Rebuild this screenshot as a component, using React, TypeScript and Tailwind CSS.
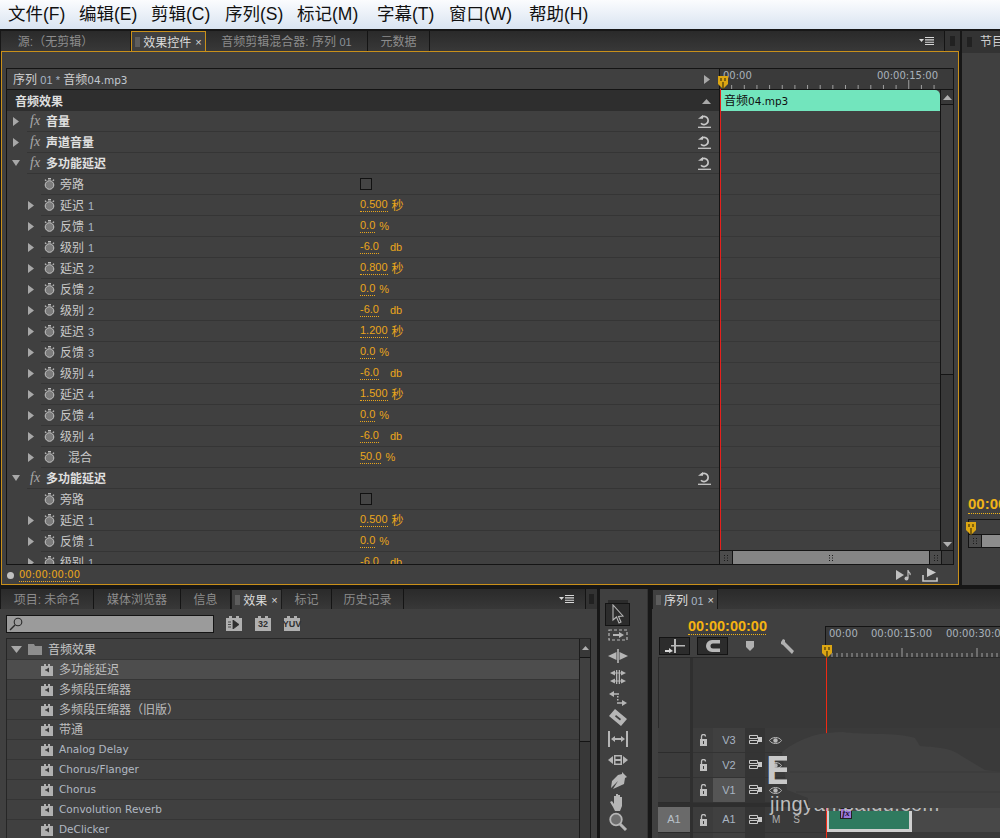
import { ReactNode } from "react";

const cjk = "font-['Liberation_Sans','Noto_Sans_CJK_SC',sans-serif]";
const uiFont = "font-['DejaVu_Sans','Noto_Sans_CJK_SC',sans-serif]";

type Param = { label: string; num?: string; value: string; unit: string };

const delayParams: Param[] = [
  { label: "延迟", num: "1", value: "0.500", unit: "秒" },
  { label: "反馈", num: "1", value: "0.0", unit: "%" },
  { label: "级别", num: "1", value: "-6.0", unit: "db" },
  { label: "延迟", num: "2", value: "0.800", unit: "秒" },
  { label: "反馈", num: "2", value: "0.0", unit: "%" },
  { label: "级别", num: "2", value: "-6.0", unit: "db" },
  { label: "延迟", num: "3", value: "1.200", unit: "秒" },
  { label: "反馈", num: "3", value: "0.0", unit: "%" },
  { label: "级别", num: "4", value: "-6.0", unit: "db" },
  { label: "延迟", num: "4", value: "1.500", unit: "秒" },
  { label: "反馈", num: "4", value: "0.0", unit: "%" },
  { label: "级别", num: "4", value: "-6.0", unit: "db" },
];

const secondParams = delayParams.slice(0, 3);

const audioEffects = [
  "多功能延迟",
  "多频段压缩器",
  "多频段压缩器（旧版）",
  "带通",
  "Analog Delay",
  "Chorus/Flanger",
  "Chorus",
  "Convolution Reverb",
  "DeClicker",
];

// menu items are not evenly spaced, widths read off the screenshot
const menus = [
  { label: "文件(F)", width: "w-[71px]" },
  { label: "编辑(E)", width: "w-[72px]" },
  { label: "剪辑(C)", width: "w-[74px]" },
  { label: "序列(S)", width: "w-[72px]" },
  { label: "标记(M)", width: "w-[80px]" },
  { label: "字幕(T)", width: "w-[72px]" },
  { label: "窗口(W)", width: "w-[80px]" },
  { label: "帮助(H)", width: "w-[70px]" },
];

function Tri({ down, className = "" }: { down?: boolean; className?: string }) {
  return (
    <svg width="8" height="9" viewBox="0 0 8 9" className={className}>
      {down ? <path d="M0 1h8L4 7z" fill="#a8a8a8" /> : <path d="M1 0l6 4.5L1 9z" fill="#a8a8a8" />}
    </svg>
  );
}

function Stopwatch() {
  return (
    <svg width="11" height="12" viewBox="0 0 11 12">
      <path d="M4 0h3v1.5H4zM0.5 2l1.2-.8 1 1.2-1 .8zM10.500 2l-1.200-.8-1 1.200 1 .8z" fill="#bdbdbd" />
      <circle cx="5.500" cy="7" r="4.300" fill="#7c7c7c" stroke="#c4c4c4" strokeWidth="1" />
    </svg>
  );
}

function ResetIcon() {
  return (
    <svg width="13" height="13" viewBox="0 0 13 13" fill="none">
      <path d="M3.200 2.500A4.100 4.100 0 1 1 3 8.200" stroke="#c8c8c8" strokeWidth="1.700" />
      <path d="M0 3.800h5V0z" fill="#c8c8c8" />
      <path d="M0 12.300h13" stroke="#c8c8c8" strokeWidth="1.300" />
    </svg>
  );
}

function PanelMenu() {
  return (
    <svg width="16" height="8" viewBox="0 0 16 8">
      <path d="M0 2h5L2.500 5z" fill="#d8d8d8" />
      <path d="M6 .5h9M6 2.900h9M6 5.300h9M6 7.500h9" stroke="#d8d8d8" strokeWidth="1.100" />
    </svg>
  );
}

function Grip({ vertical = true, color = "#111" }: { vertical?: boolean; color?: string }) {
  return vertical ? (
    <svg width="5" height="11" viewBox="0 0 5 11">
      <path d="M0 1h5M0 3h5M0 5h5M0 7h5M0 9h5" stroke={color} strokeWidth="1" />
    </svg>
  ) : (
    <svg width="20" height="4" viewBox="0 0 20 4">
      <path d="M1 0v4M3 0v4M5 0v4M7 0v4M9 0v4M11 0v4M13 0v4M15 0v4M17 0v4M19 0v4" stroke={color} strokeWidth="1" />
    </svg>
  );
}

function Playhead() {
  return (
    <svg width="10" height="13" viewBox="0 0 10 13">
      <path d="M0 0h10v8l-5 5-5-5z" fill="#dca613" />
      <path d="M3 2v3M7 2v3M5 6v7" stroke="#33280a" strokeWidth="1.100" />
    </svg>
  );
}

function Value({ value, unit }: { value: string; unit: string }) {
  return (
    <div className="flex items-center pt-px text-[11px] leading-none text-[#eaa61c]">
      <span className="border-b border-dotted border-[#eaa61c] pb-px">{value}</span>
      <span className={unit === "db" ? "ml-[11px]" : unit === "秒" ? "ml-[4px] text-[12px]" : "ml-[4px]"}>{unit}</span>
    </div>
  );
}

function FxRow({ name, open }: { name: string; open?: boolean }) {
  return (
    <div className="flex h-[21px] shrink-0">
      <div className="flex w-[20px] shrink-0 items-center pl-[5px]">
        <Tri down={open} />
      </div>
      <div className="flex flex-1 items-center border-b border-[#353535]">
        <span className="ml-[3px] w-[16px] font-['Liberation_Serif',serif] text-[14px] italic leading-none text-[#a8a8a8]">
          fx
        </span>
        <span className="pt-[2px] text-[12px] font-bold text-[#e0e0e0]">{name}</span>
        <span className="ml-auto mr-[8px] flex">
          <ResetIcon />
        </span>
      </div>
    </div>
  );
}

function ParamRow({ p, noArrow, indent }: { p: Param; noArrow?: boolean; indent?: boolean }) {
  return (
    <div className="flex h-[21px] shrink-0">
      <div className="flex w-[34px] shrink-0 items-center pl-[20px]">{!noArrow && <Tri />}</div>
      <div className="flex flex-1 items-center border-b border-[#353535]">
        <span className="ml-[3px] flex w-[16px]">
          <Stopwatch />
        </span>
        <span className={`w-[300px] pt-[2px] text-[12px] text-[#c8c8c8] ${indent ? "pl-[8px]" : ""}`}>
          {p.label}
          {p.num && <span className="ml-[4px] text-[11px] text-[#a8b6c6]">{p.num}</span>}
        </span>
        {p.value ? (
          <Value value={p.value} unit={p.unit} />
        ) : (
          <span className="h-[12px] w-[12px] border border-[#111] bg-[#454545]" />
        )}
      </div>
    </div>
  );
}

function Tab({
  label,
  width,
  active,
  gold,
  extra = "",
}: {
  label: ReactNode;
  width: string;
  active?: boolean;
  gold?: boolean;
  extra?: string;
}) {
  const look = active
    ? gold
      ? "relative z-10 border-x border-t border-[#c9901a] bg-[#404040] text-[#dcdcdc] -mb-px"
      : "relative z-10 border-x border-t border-[#1a1a1a] bg-[#404040] text-[#dcdcdc] -mb-px"
    : "border-r border-[#141414] bg-gradient-to-b from-[#2a2a2a] to-[#383838] text-[#8c8c8c]";
  return (
    <div className={`flex h-[20px] shrink-0 items-center justify-center pt-[2px] text-[12px] leading-none ${width} ${look} ${extra}`}>
      {active && (
        <span className="mr-[3px] flex">
          <Grip color="#7a7a7a" />
        </span>
      )}
      {label}
      {active && <span className="ml-[4px] text-[11px] text-[#d8d8d8]">×</span>}
    </div>
  );
}

function TabFill() {
  return <div className="h-[20px] flex-1 bg-gradient-to-b from-[#2a2a2a] to-[#383838]" />;
}

function Ruler({ width, step, major, offset }: { width: number; step: number; major: number; offset: number }) {
  const ticks: number[] = [];
  for (let x = offset; x < width; x += step) ticks.push(x);
  return (
    <svg width={width} height="9" className="absolute bottom-0 left-0">
      {ticks.map((x, i) => (
        <path key={i} d={`M${x} ${i % major === 0 ? 0 : 5}V9`} stroke="#a0a0a0" strokeWidth="1" />
      ))}
    </svg>
  );
}

function ScrollGrip() {
  return (
    <svg width="4" height="6" viewBox="0 0 4 6">
      <path d="M0 0h1v1H0zM3 0h1v1H3zM0 2.500h1v1H0zM3 2.500h1v1H3zM0 5h1v1H0zM3 5h1v1H3z" fill="#1a1a1a" />
    </svg>
  );
}

function SourcePanel() {
  return (
    <div className="flex w-[960px] shrink-0 flex-col">
      <div className="flex h-[20px] pl-px">
        <Tab width="w-[130px]" extra="pr-[20px]" label="源:（无剪辑）" />
        <Tab width="w-[75px]" label="效果控件" active gold />
        <Tab width="w-[162px]" label={<span>音频剪辑混合器: 序列 <span className="text-[11px] text-[#8a9098]">01</span></span>} />
        <Tab width="w-[62px]" label="元数据" />
        <div className="flex h-[20px] flex-1 items-center justify-end bg-gradient-to-b from-[#2a2a2a] to-[#383838] pr-[9px]">
          <PanelMenu />
        </div>
        <div className="flex w-[16px] items-center justify-center border-l border-[#141414] bg-[#333]">
          <Grip />
        </div>
      </div>
      <div className="ml-px mr-[1px] flex h-[534px] flex-col border border-[#c9901a] bg-[#404040] px-[4px] pt-[16px]">
        <div className="flex h-[497px] border border-[#141414]">
          <div className="flex w-[712px] shrink-0 flex-col overflow-hidden">
            <div className="flex h-[21px] shrink-0 items-center justify-between border-b border-[#141414] pl-[6px] pr-[8px] pt-px text-[12px] text-[#cfcfcf]">
              <span>
                序列 <span className="text-[11px] text-[#a8b6c6]">01 *</span> 音频<span className={`${uiFont} text-[10.500px] text-[#c0c8d0]`}>04.mp3</span>
              </span>
              <Tri />
            </div>
            <div className="flex h-[21px] shrink-0 items-center justify-between bg-[#2e2e2e] pl-[8px] pr-[8px] pt-[2px] text-[12px] font-bold text-[#dedede]">
              音频效果
              <svg width="9" height="5" viewBox="0 0 9 5">
                <path d="M4.500 0L9 5H0z" fill="#a8a8a8" />
              </svg>
            </div>
            <FxRow name="音量" />
            <FxRow name="声道音量" />
            <FxRow name="多功能延迟" open />
            <ParamRow p={{ label: "旁路", value: "", unit: "" }} noArrow />
            {delayParams.map((p, i) => (
              <ParamRow key={i} p={p} />
            ))}
            <ParamRow p={{ label: "混合", value: "50.0", unit: "%" }} indent />
            <FxRow name="多功能延迟" open />
            <ParamRow p={{ label: "旁路", value: "", unit: "" }} noArrow />
            {secondParams.map((p, i) => (
              <ParamRow key={i} p={p} />
            ))}
          </div>
          <div className="relative flex flex-1 flex-col border-l border-[#141414]">
            <div className="relative h-[21px] shrink-0 overflow-hidden border-b border-[#141414] bg-[#3a3a3a] text-[10px] leading-none">
              <span className={`${uiFont} absolute left-[3px] top-[2px] text-[#a9b2bc]`}>00:00</span>
              <span className={`${uiFont} absolute right-[15px] top-[2px] text-[#a9b2bc]`}>00:00:15:00</span>
              <Ruler width={220} step={12.650} major={15} offset={-1} />
            </div>
            <div className="flex min-h-0 flex-1">
              <div className="flex flex-1 flex-col overflow-hidden">
                <div className="flex h-[21px] shrink-0 items-center rounded-tr-[5px] bg-[#72e5bd] pl-[4px] pt-px text-[12px] leading-none text-[#101010]">
                  音频<span className={`${uiFont} text-[10.500px]`}>04.mp3</span>
                </div>
                {Array.from({ length: 22 }).map((_, i) => (
                  <div key={i} className="h-[21px] shrink-0 border-b border-[#373737]" />
                ))}
              </div>
              <div className="flex w-[13px] shrink-0 flex-col border-l border-[#141414] bg-[#383838]">
                <div className="flex h-[15px] items-center justify-center border-b border-[#141414]">
                  <svg width="9" height="5" viewBox="0 0 9 5">
                    <path d="M4.500 0L9 5H0z" fill="#b0b0b0" />
                  </svg>
                </div>
                <div className="h-[270px] border-b border-[#141414] bg-[#404040]" />
                <div className="flex flex-1 items-end justify-center pb-[3px]">
                  <svg width="9" height="5" viewBox="0 0 9 5">
                    <path d="M0 0h9L4.500 5z" fill="#b0b0b0" />
                  </svg>
                </div>
              </div>
            </div>
            <div className="flex h-[14px] shrink-0 border-t border-[#141414] bg-[#404040]">
              <div className="flex w-[13px] items-center justify-center border-r border-[#141414] bg-[#4c4c4c]">
                <ScrollGrip />
              </div>
              <div className="flex w-[196px] items-center justify-center bg-[#858585]">
                <ScrollGrip />
              </div>
              <div className="flex w-[13px] items-center justify-center border-x border-[#141414] bg-[#4c4c4c]">
                <ScrollGrip />
              </div>
              <div className="flex-1 bg-[#3c3c3c]" />
            </div>
            {/* playhead + red line sit over the clip */}
            <div className="absolute left-0 top-[20px] bottom-[14px] w-px bg-[#e8201c]" />
            <div className="absolute left-[-2px] top-[7px]">
              <Playhead />
            </div>
          </div>
        </div>
        <div className="flex h-[19px] items-center pt-px">
          <span className="ml-[1px] h-[7px] w-[7px] rounded-full bg-[#c0c0c0]" />
          <span className={`${uiFont} ml-[5px] border-b border-dotted border-[#eaa61c] text-[10px] leading-[12px] text-[#eaa61c]`}>
            00:00:00:00
          </span>
          <div className="ml-auto mr-[16px] flex items-center gap-[11px]">
            <svg width="15" height="12" viewBox="0 0 15 12">
              <path d="M0 1l8 5-8 5z" fill="#c0c0c0" />
              <path d="M12 1c0 3 3 2 2 5M12 1v8" stroke="#c0c0c0" strokeWidth="1.200" fill="none" />
              <circle cx="10.500" cy="9.500" r="2" fill="#c0c0c0" />
            </svg>
            <svg width="16" height="14" viewBox="0 0 16 14">
              <path d="M1 7v6h14V9.500" stroke="#c8c8c8" strokeWidth="1.600" fill="none" />
              <path d="M5 0l9 4.500L5 9z" fill="#c8c8c8" />
            </svg>
          </div>
        </div>
      </div>
    </div>
  );
}

function ProgramStub() {
  return (
    <div className="ml-[2px] flex h-[554px] flex-1 flex-col bg-[#404040]">
      <div className="flex h-[22px] items-center bg-[#333]">
        <span className="ml-[5px] flex">
          <Grip />
        </span>
        <span className="ml-[8px] text-[12px] text-[#cfcfcf]">节目</span>
      </div>
      <div className="mt-[442px] pl-[6px] font-['Liberation_Sans',sans-serif] text-[15px] font-bold leading-[18px] text-[#f0b418]">
        <span className="block w-[40px] overflow-hidden border-b border-dotted border-[#f0b418]">00:00</span>
      </div>
      <div className="relative ml-[6px] mt-[5px] h-[15px] border-l border-t border-[#141414]">
        <div className="absolute left-[-3px] top-[2px]">
          <Playhead />
        </div>
      </div>
      <div className="ml-[6px] flex h-[14px] border-y border-l border-[#141414]">
        <div className="flex w-[13px] items-center justify-center border-r border-[#141414] bg-[#4c4c4c]">
          <ScrollGrip />
        </div>
        <div className="flex-1 bg-[#8c8c8c]" />
      </div>
    </div>
  );
}

function EffectGlyph() {
  return (
    <svg width="12" height="12" viewBox="0 0 12 12">
      <path d="M0 2h3V0h2v2h2V0h2v2h3v10H0z" fill="#b0b0b0" />
      <path d="M8 3.500v5L5 6.500H4v-1h1z" fill="#3a3a3a" />
    </svg>
  );
}

function EffectsPanel() {
  return (
    <div className="flex w-[597px] shrink-0 flex-col">
      <div className="flex h-[20px]">
        <div className="w-px" />
        <Tab width="w-[93px]" label="项目: 未命名" />
        <Tab width="w-[87px]" label="媒体浏览器" />
        <Tab width="w-[50px]" label="信息" />
        <Tab width="w-[51px]" label="效果" active />
        <Tab width="w-[50px]" label="标记" />
        <Tab width="w-[72px]" label="历史记录" />
        <div className="flex h-[20px] flex-1 items-center justify-end bg-gradient-to-b from-[#2a2a2a] to-[#383838] pr-[10px]">
          <PanelMenu />
        </div>
        <div className="flex w-[12px] items-center justify-center border-l border-[#141414] bg-[#333]">
          <Grip />
        </div>
      </div>
      <div className="flex flex-1 flex-col overflow-hidden bg-[#404040] pl-[6px] pr-[6px]">
        <div className="flex h-[28px] shrink-0 items-center pt-[2px]">
          <div className="flex h-[18px] w-[208px] items-center border border-[#141414] bg-[#9b9b9b] pl-[2px]">
            <svg width="14" height="14" viewBox="0 0 14 14" fill="none">
              <circle cx="9" cy="5" r="3.800" stroke="#2a2a2a" strokeWidth="1.100" />
              <path d="M6 8l-5 5" stroke="#2a2a2a" strokeWidth="1.500" />
            </svg>
          </div>
          <div className="ml-[12px] flex gap-[13px]">
            {["play", "32", "YUV"].map((b) => (
              <div key={b} className="relative flex h-[13px] w-[16px] items-center justify-center bg-[#b0b0b0]">
                <span className="absolute left-[3px] top-[-2px] h-[2px] w-[3px] bg-[#b0b0b0]" />
                <span className="absolute right-[3px] top-[-2px] h-[2px] w-[3px] bg-[#b0b0b0]" />
                {b === "play" ? (
                  <svg width="12" height="9" viewBox="0 0 12 9">
                    <path d="M5 0l6 4.500-6 4.500zM0 2h3M0 4.500h3M0 7h3" fill="#303030" stroke="#303030" strokeWidth="0.800" />
                  </svg>
                ) : (
                  <span className="font-['Liberation_Sans',sans-serif] text-[9px] font-bold leading-none text-[#303030]">{b}</span>
                )}
              </div>
            ))}
          </div>
        </div>
        <div className="mt-[1px] flex flex-1 border-l border-t border-[#262626]">
          <div className="flex-1">
            <div className="flex h-[21px] items-center border-b border-[#353535] pl-[4px] text-[12px] text-[#c8c8c8]">
              <svg width="11" height="7" viewBox="0 0 11 7">
                <path d="M0 0h11L5.500 7z" fill="#a8a8a8" />
              </svg>
              <svg width="14" height="11" viewBox="0 0 14 11" className="ml-[6px]">
                <path d="M0 0h6l1 2h7v9H0z" fill="#8e8e8e" />
              </svg>
              <span className="ml-[6px] pt-[2px]">音频效果</span>
            </div>
            {audioEffects.map((name, i) => (
              <div
                key={name}
                className={`flex h-[20px] items-center border-b border-[#353535] pl-[34px] text-[12px] text-[#bdbdbd] ${i === 0 ? "bg-[#4d4d4d]" : ""}`}
              >
                <EffectGlyph />
                <span className={`ml-[6px] ${i > 3 ? `${uiFont} text-[10.500px] text-[#b0b8c2]` : ""}`}>{name}</span>
              </div>
            ))}
          </div>
          <div className="flex w-[12px] shrink-0 flex-col border-x border-[#1c1c1c] bg-[#383838]">
            <div className="flex h-[18px] items-center justify-center">
              <svg width="7" height="4" viewBox="0 0 7 4">
                <path d="M3.500 0L7 4H0z" fill="#b0b0b0" />
              </svg>
            </div>
            <div className="h-[85px] border-y border-[#141414] bg-[#404040]" />
          </div>
        </div>
      </div>
    </div>
  );
}

const tool = "#b6b6b6";
const toolIcons: ReactNode[] = [
  <path key="sel" d="M5 1v15l3.500-3 2.500 6 2-1-2.500-5.500 4.500-.5z" fill="none" stroke={tool} strokeWidth="1.100" />,
  <g key="track">
    <rect x="1" y="5" width="18" height="10" fill="none" stroke={tool} strokeWidth="1.200" strokeDasharray="3 2" />
    <path d="M5 9h6V7l5 3-5 3v-2H5z" fill={tool} />
  </g>,
  <g key="ripple" fill={tool}>
    <path d="M9.200 3h1.600v14H9.200z" />
    <path d="M8.500 6v8L0 10zM11.500 6v8L20 10z" />
  </g>,
  <g key="roll" fill={tool}>
    <path d="M8 3h1.300v14H8zM10.700 3H12v14h-1.300z" />
    <path d="M7 3.500v5L2 6zM13 3.500v5L18 6zM7 11.500v5L2 14zM13 11.500v5L18 14z" />
    <path d="M6 6h8M6 14h8" stroke={tool} />
  </g>,
  <g key="rate" fill={tool}>
    <path d="M1 6l5-3v2.300h5v1.400H6V9zM19 15l-5-3v2.300H9v1.400h5V18z" />
    <path d="M9 8h1.500v1.500H9zM9 11h1.500v1.500H9z" />
  </g>,
  <path key="razor" d="M7 1l12 10-6 7L1 8zM8 7l-1 1.500 5 4 1-1.500z" fill={tool} fillRule="evenodd" />,
  <g key="slip" fill={tool}>
    <path d="M0 2h2v16H0zM18 2h2v16h-2z" />
    <path d="M3 10l4-3v2h6V7l4 3-4 3v-2H7v2z" />
  </g>,
  <g key="slide" fill={tool}>
    <path d="M0 10l5-4v8zM20 10l-5-4v8z" />
    <path d="M6 5h8v10H6zM7.500 9h5V6.500h-5zM7.500 11v2.500h5V11z" fillRule="evenodd" />
  </g>,
  <path key="pen" d="M14 1l5 5-2 1-1 6-11 5 5-8-1 1-6 6 1-7 6-6 4-1z" fill={tool} />,
  <path key="hand" d="M2 10l2-1 2 3V4h2v5V2h2v7V3h2v6V5h2v9l-2 5H7l-2-4z" fill={tool} />,
  <g key="zoom">
    <circle cx="8" cy="7.500" r="5.800" fill="#6e6e6e" stroke={tool} strokeWidth="1.800" />
    <path d="M12 12l6 6" stroke={tool} strokeWidth="3" />
  </g>,
];

function ToolsPanel() {
  return (
    <div className="ml-[3px] flex w-[48px] shrink-0 flex-col border-r border-[#333] bg-[#404040] pl-[6px]">
      <div className="flex h-[15px] w-[23px] items-end justify-center">
        <Grip vertical={false} color="#161616" />
      </div>
      {toolIcons.map((icon, i) => (
        <div
          key={i}
          className={`flex h-[20.800px] w-[23px] items-center justify-center ${i === 0 ? "bg-[#2c2c2c] outline outline-1 outline-[#141414]" : ""}`}
        >
          <svg width="20" height="20" viewBox="0 0 20 20">
            {icon}
          </svg>
        </div>
      ))}
    </div>
  );
}

function TrackRow({
  label,
  target,
  src,
  last,
  tall,
  children,
}: {
  label: string;
  target?: boolean;
  src?: boolean;
  last?: ReactNode;
  tall?: boolean;
  children?: ReactNode;
}) {
  return (
    <div className={`flex ${tall ? "h-[26px]" : "h-[25px]"} shrink-0`}>
      <div className={`flex w-[32px] shrink-0 items-center justify-center border-b border-[#2c2c2c] text-[11px] text-[#b8c0c8] ${src ? "bg-[#6a6a6a]" : "bg-[#3c3c3c]"}`}>
        {src ? "A1" : ""}
      </div>
      <div className="w-[3px] shrink-0 bg-[#2f2f2f]" />
      <div className="flex w-[20px] shrink-0 items-center justify-center border-b border-[#333] bg-[#3c3c3c]">
        <svg width="9" height="12" viewBox="0 0 9 12">
          <path d="M1 5h7v7H1z" fill="#c0c0c0" />
          <path d="M2.500 5V2.500a2 2 0 0 1 4 0" stroke="#c0c0c0" strokeWidth="1.300" fill="none" />
          <path d="M4 7h1v3H4z" fill="#3c3c3c" />
        </svg>
      </div>
      <div className={`flex w-[32px] shrink-0 items-center justify-center border-b border-[#333] text-[11px] text-[#a8b4c2] ${target ? "bg-[#555]" : "bg-[#404040]"}`}>
        {label}
      </div>
      <div className="flex w-[20px] shrink-0 items-center justify-center border-b border-[#333] bg-[#343434]">
        <svg width="13" height="10" viewBox="0 0 13 10" fill="none">
          <path d="M.5.500h8v3h-8zM.5 5.500h8v3h-8z" stroke="#c8c8c8" />
          <path d="M9 2h4v5H9z" fill="#c8c8c8" />
        </svg>
      </div>
      <div className="flex w-[61px] shrink-0 items-center border-b border-[#333] bg-[#3a3a3a] pl-[4px]">{last}</div>
      <div className={`relative flex-1 border-b border-[#3a3a3a] ${src ? "bg-[#484848]" : "bg-[#3a3a3a]"}`}>{children}</div>
    </div>
  );
}

function Eye() {
  return (
    <svg width="13" height="9" viewBox="0 0 13 9" fill="none">
      <path d="M.5 4.500C3 .5 10 .5 12.500 4.500 10 8.500 3 8.500.5 4.500z" stroke="#b8b8b8" />
      <circle cx="6.500" cy="4.500" r="2.200" fill="#b8b8b8" />
    </svg>
  );
}

function TimelinePanel() {
  return (
    <div className="relative ml-[4px] flex flex-1 flex-col overflow-hidden">
      <div className="flex h-[20px]">
        <Tab width="w-[66px]" label={<span>序列 <span className="text-[11px] text-[#a8b6c6]">01</span></span>} active />
        <TabFill />
      </div>
      <div className="flex h-[48px] shrink-0 bg-[#404040]">
        <div className="w-[173px] shrink-0 pl-[7px]">
          <div className="ml-[29px] mt-[9px] w-[78px] border-b border-dotted border-[#f0b418] font-['Liberation_Sans',sans-serif] text-[14.500px] font-bold leading-[16px] text-[#f5b312]">
            00:00:00:00
          </div>
          <div className="mt-[2px] flex items-center">
            <div className="flex h-[18px] w-[31px] items-center justify-center border border-[#141414] bg-[#2c2c2c]">
              <svg width="20" height="14" viewBox="0 0 20 14">
                <path d="M9 0h2v14H9zM6 6h14v1.500H6z" fill="#b8b8b8" />
                <path d="M0 11h4V9l4 3-4 2v-1H0z" fill="#d8d8d8" />
              </svg>
            </div>
            <div className="ml-[7px] flex h-[18px] w-[31px] items-center justify-center border border-[#141414] bg-[#2c2c2c]">
              <svg width="14" height="12" viewBox="0 0 14 12">
                <path d="M6 0h8v3.500H7a2.500 2.500 0 0 0 0 5h7V12H6A6 6 0 0 1 6 0z" fill="#b8b8b8" />
              </svg>
            </div>
            <svg width="8" height="10" viewBox="0 0 8 10" className="ml-[18px]">
              <path d="M0 0h8v6l-4 4-4-4z" fill="#b0b0b0" />
            </svg>
            <svg width="15" height="15" viewBox="0 0 15 15" className="ml-[27px]">
              <path d="M0 3l2-3 2 1v2l9 9-2 3-9-9-2-1z" fill="#b0b0b0" />
            </svg>
          </div>
        </div>
        <div className="relative mt-[17px] flex-1 border-l border-t border-[#141414] bg-[#3a3a3a] text-[10px] leading-none text-[#a9b2bc]">
          <div className={`${uiFont} flex pl-[3px] pt-[2px]`}>
            <span className="w-[42px]">00:00</span>
            <span className="w-[75px]">00:00:15:00</span>
            <span>00:00:30:00</span>
          </div>
          <Ruler width={175} step={5} major={15} offset={1} />
        </div>
      </div>
      <div className="flex flex-1 flex-col bg-[#404040] pl-[6px]">
        <div className="flex h-[71px] shrink-0 border-t border-[#2a2a2a]">
          <div className="w-[32px] border-l border-[#2a2a2a] bg-[#3c3c3c]" />
          <div className="w-[3px] bg-[#2f2f2f]" />
          <div className="flex-1 bg-[#383838]" />
        </div>
        <TrackRow label="V3" last={<Eye />} />
        <TrackRow label="V2" last={<Eye />} />
        <TrackRow label="V1" target last={<Eye />} />
        <div className="h-[4px] shrink-0 bg-[#2e2e2e]" />
        <TrackRow
          label="A1"
          src
          tall
          last={
            <span className="flex gap-[13px] text-[10px] text-[#b0b0b0]">
              <span className="ml-[3px]">M</span>
              <span>S</span>
            </span>
          }
        >
          <div className="mt-[4px] h-[21px] w-[86px] border-x-[3px] border-b-[3px] border-[#cfcfcf] bg-[#2f7a5f]" />
          <span className="absolute left-[14px] top-[1px] flex h-[11px] w-[12px] items-center justify-center border border-[#222] bg-[#9a78d8] font-['Liberation_Serif',serif] text-[9px] font-bold italic leading-none text-[#20102a]">
            fx
          </span>
        </TrackRow>
        <TrackRow label="" />
      </div>
      {/* playhead sits on top of the ruler and tracks */}
      <div className="absolute left-[174px] top-[67px] bottom-0 z-10 w-px bg-[#f02a14]" />
      <div className="absolute left-[170px] top-[56px] z-10">
        <Playhead />
      </div>
      {/* blurred-out watermark over the tracks */}
      <div className="absolute left-[118px] top-[205px] z-20 font-['Liberation_Sans',sans-serif] text-[20px] leading-none tracking-wide text-[#bdbdbd]">
        jingyan.baidu.com
      </div>
      <svg width="230" height="85" viewBox="0 0 230 85" className="absolute left-[120px] top-[135px] z-20">
        <path d="M10 28C30 12 50 8 71 8c15 3 55 0 72 6l5 8c14 1 32 2 40 9l25 15 17 2v36H36V74L15 66z" fill="#414141" />
        <path d="M18 48H230M24 68H230" stroke="#3a3a3a" strokeWidth="1" />
      </svg>
      <div className="absolute left-[114px] top-[161px] z-20 h-[42px] w-[21px] overflow-hidden font-['Liberation_Sans',sans-serif] text-[41px] font-bold leading-none text-[#c8c8c8]">
        E
      </div>
    </div>
  );
}

export default function App() {
  return (
    <div className={`flex h-[838px] w-[1000px] flex-col overflow-hidden bg-[#171717] ${cjk}`}>
      <div className="flex h-[29px] shrink-0 items-center bg-gradient-to-b from-[#fbfcfe] to-[#d9e4f1] pl-[8px] text-[17.500px] leading-none text-[#111]">
        {menus.map((m) => (
          <span key={m.label} className={m.width}>
            {m.label}
          </span>
        ))}
      </div>
      <div className="mt-[2px] flex h-[556px] shrink-0">
        <SourcePanel />
        <ProgramStub />
      </div>
      <div className="mt-[2px] flex min-h-0 flex-1">
        <EffectsPanel />
        <ToolsPanel />
        <TimelinePanel />
      </div>
    </div>
  );
}
